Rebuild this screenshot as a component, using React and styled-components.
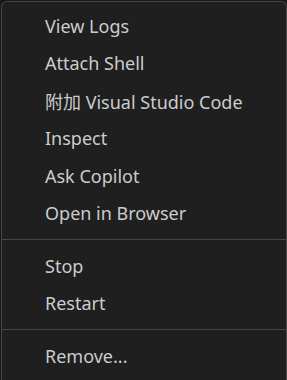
import React from "react";
import styled, { createGlobalStyle } from "styled-components";

const GlobalStyle = createGlobalStyle`
  html, body {
    margin: 0;
    padding: 0;
    background: #181818;
    overflow: hidden;
  }
`;

// the menu continues below the window, so no bottom border
const Menu = styled.div`
  box-sizing: border-box;
  width: 286px;
  min-height: calc(100vh - 1px);
  margin: 1px 0 0 1px;
  padding: 5px 0 0;
  background: #1f1f1f;
  border: 1px solid #454545;
  border-bottom: none;
  border-radius: 6px 6px 0 0;
  font-family: "Noto Sans", "Noto Sans CJK SC", sans-serif;
  font-size: 18px;
  color: #cccccc;
`;

const Item = styled.div`
  display: flex;
  align-items: center;
  height: 37.5px;
  padding-left: 43px;
  white-space: nowrap;
  cursor: default;
`;

const Separator = styled.div`
  height: 1px;
  margin: 7px 0;
  background: #454545;
`;

const groups = [
  ["View Logs", "Attach Shell", "附加 Visual Studio Code", "Inspect", "Ask Copilot", "Open in Browser"],
  ["Stop", "Restart"],
  ["Remove..."],
];

export default function App() {
  return (
    <>
      <GlobalStyle />
      <Menu>
        {groups.map((group, i) => (
          <React.Fragment key={i}>
            {i > 0 && <Separator />}
            {group.map((label) => (
              <Item key={label}>{label}</Item>
            ))}
          </React.Fragment>
        ))}
      </Menu>
    </>
  );
}
